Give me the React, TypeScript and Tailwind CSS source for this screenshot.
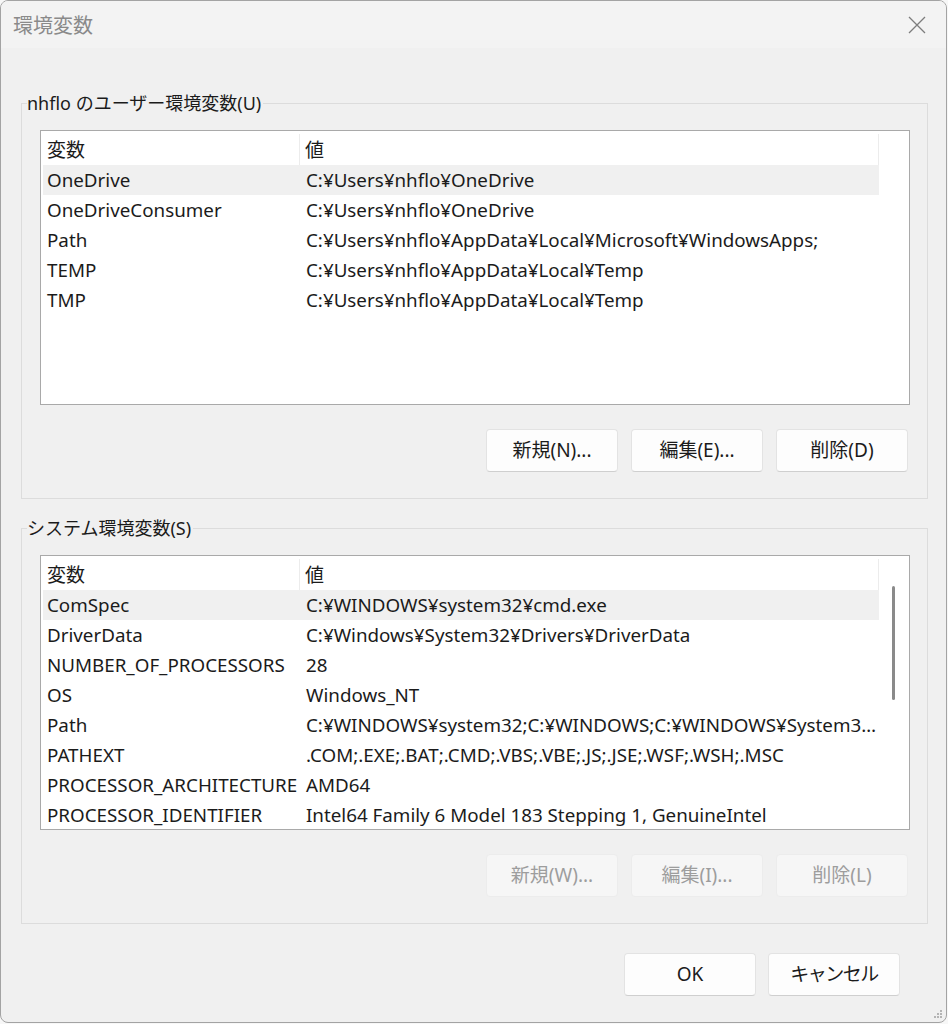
import React from "react";

const FONT = {
  fontFamily: '"Noto Sans", "Noto Sans CJK JP", sans-serif',
};

type Row = [string, string];

const userVars: Row[] = [
  ["OneDrive", "C:¥Users¥nhflo¥OneDrive"],
  ["OneDriveConsumer", "C:¥Users¥nhflo¥OneDrive"],
  ["Path", "C:¥Users¥nhflo¥AppData¥Local¥Microsoft¥WindowsApps;"],
  ["TEMP", "C:¥Users¥nhflo¥AppData¥Local¥Temp"],
  ["TMP", "C:¥Users¥nhflo¥AppData¥Local¥Temp"],
];

const sysVars: Row[] = [
  ["ComSpec", "C:¥WINDOWS¥system32¥cmd.exe"],
  ["DriverData", "C:¥Windows¥System32¥Drivers¥DriverData"],
  ["NUMBER_OF_PROCESSORS", "28"],
  ["OS", "Windows_NT"],
  ["Path", "C:¥WINDOWS¥system32;C:¥WINDOWS;C:¥WINDOWS¥System3…"],
  ["PATHEXT", ".COM;.EXE;.BAT;.CMD;.VBS;.VBE;.JS;.JSE;.WSF;.WSH;.MSC"],
  ["PROCESSOR_ARCHITECTURE", "AMD64"],
  ["PROCESSOR_IDENTIFIER", "Intel64 Family 6 Model 183 Stepping 1, GenuineIntel"],
];

function ListView({ rows, scroll }: { rows: Row[]; scroll?: boolean }) {
  return (
    <div className="relative h-[275px] w-[870px] overflow-hidden border border-[#a9a9a9] bg-white">
      <div className="w-[838px]">
        <div className="flex h-[34px] items-center pt-[3px] text-[19px] leading-[26px] text-[#1b1b1b]">
          <div className="flex h-full w-[259px] items-center border-r border-[#ececec] pl-[6px]">変数</div>
          <div className="flex h-full w-[579px] items-center border-r border-[#ececec] pl-[5px]">値</div>
        </div>
        {rows.map((r, i) => (
          <div
            key={r[0] + i}
            className={`ml-[2px] flex h-[30px] items-center text-[18.8px] leading-[26px] text-[#1b1b1b] ${i === 0 ? "bg-[#f0f0f0]" : ""}`}
          >
            <div className="w-[257px] shrink-0 overflow-hidden whitespace-nowrap pl-[4px]">{r[0]}</div>
            <div className="w-[579px] shrink-0 whitespace-nowrap pl-[6px]">{r[1]}</div>
          </div>
        ))}
      </div>
      {scroll && (
        <div className="absolute left-[851px] top-[30px] h-[114px] w-[3px] rounded-full bg-[#8a8a8a]" />
      )}
    </div>
  );
}

function Btn({ label, disabled, tight }: { label: string; disabled?: boolean; tight?: boolean }) {
  return (
    <div
      className={`flex h-[43px] w-[132px] items-center justify-center rounded-[4px] border text-[19px] ${
        tight ? "tracking-[-1.5px]" : ""
      } ${
        disabled
          ? "border-[#ececec] bg-[#f6f6f6] text-[#9d9d9d]"
          : "border-[#e3e3e3] border-b-[#cfcfcf] bg-[#fdfdfd] text-[#1b1b1b]"
      }`}
    >
      {label}
    </div>
  );
}

function Group({
  title,
  rows,
  scroll,
  buttons,
  disabled,
}: {
  title: string;
  rows: Row[];
  scroll?: boolean;
  buttons: string[];
  disabled?: boolean;
}) {
  return (
    <div className="flex flex-col">
      <div className="relative z-10 ml-[6px] w-fit bg-[#f0f0f0] pr-[2px] text-[18px] leading-[22px] text-[#1b1b1b]">
        {title}
      </div>
      <div className="-mt-[11px] flex w-[907px] flex-col border border-[#dcdcdc] pb-[26px] pl-[18px] pt-[26px]">
        <ListView rows={rows} scroll={scroll} />
        <div className="mt-[24px] flex w-[868px] justify-end gap-[13px]">
          {buttons.map((b) => (
            <Btn key={b} label={b} disabled={disabled} />
          ))}
        </div>
      </div>
    </div>
  );
}

export default function App() {
  return (
    <div className="h-[1024px] w-[948px] bg-[#f7f7f7] pb-[1px] pr-[1px]" style={FONT}>
      <div className="relative flex h-[1023px] w-[947px] flex-col overflow-hidden rounded-[8px] border border-[#a3a3a3] bg-[#f0f0f0]">
        <div className="flex h-[47px] items-center justify-between bg-[#f3f3f3] pl-[12px] pr-[20px] pt-[3px]">
          <div className="text-[20px] text-[#8a8a8a]">環境変数</div>
          <svg width="18" height="18" viewBox="0 0 18 18" className="-mt-[3px]">
            <path d="M1 1 L17 17 M17 1 L1 17" stroke="#7d7d7d" strokeWidth="1.3" />
          </svg>
        </div>
        <div className="flex flex-col pl-[20px] pt-[44px]">
          <Group
            title="nhflo のユーザー環境変数(U)"
            rows={userVars}
            buttons={["新規(N)...", "編集(E)...", "削除(D)"]}
          />
          <div className="h-[18px]" />
          <Group
            title="システム環境変数(S)"
            rows={sysVars}
            scroll
            buttons={["新規(W)...", "編集(I)...", "削除(L)"]}
            disabled
          />
          <div className="mt-[29px] flex w-[879px] justify-end gap-[12px]">
            <Btn label="OK" />
            <Btn label="キャンセル" tight />
          </div>
        </div>
        <svg className="absolute bottom-[3px] right-[3px]" width="10" height="10" viewBox="0 0 10 10">
          <rect x="7" y="1" width="2" height="2" fill="#b4b4b4" />
          <rect x="4" y="4" width="2" height="2" fill="#b4b4b4" />
          <rect x="7" y="4" width="2" height="2" fill="#b4b4b4" />
          <rect x="1" y="7" width="2" height="2" fill="#b4b4b4" />
          <rect x="4" y="7" width="2" height="2" fill="#b4b4b4" />
          <rect x="7" y="7" width="2" height="2" fill="#b4b4b4" />
        </svg>
      </div>
    </div>
  );
}
